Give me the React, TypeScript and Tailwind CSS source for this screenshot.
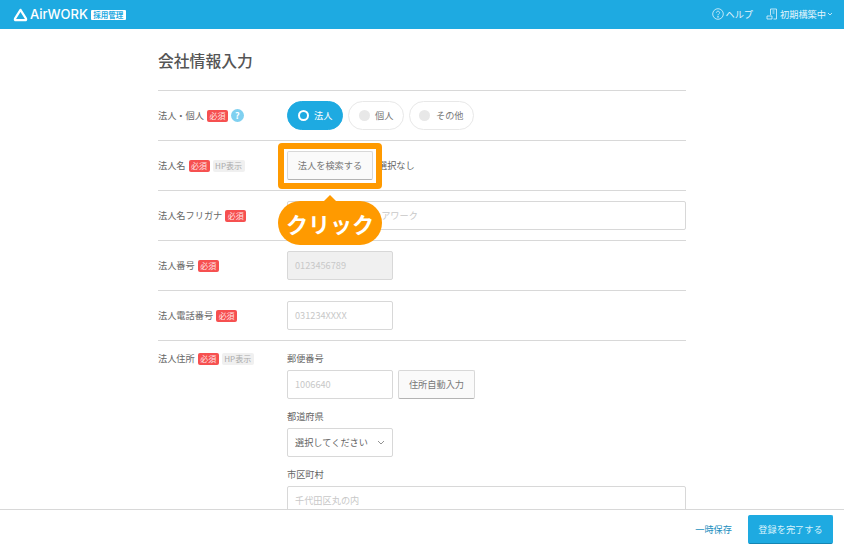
const Required = () => (
  <span className="ml-[3px] inline-flex h-[12px] w-[21px] items-center justify-center rounded-[2px] bg-[#f65050] text-[8px] text-[#ffe4e4]">
    必須
  </span>
);

const HpBadge = () => (
  <span className="ml-[3px] inline-flex h-[12px] w-[32px] items-center justify-center rounded-[2px] bg-[#f0f0f0] text-[8px] text-[#aaaaaa]">
    HP表示
  </span>
);

const Label = ({ text, hp }: { text: string; hp?: boolean }) => (
  <div className="flex w-[129px] shrink-0 items-center whitespace-nowrap pt-[1px] text-[9.2px] text-[#666666]">
    <span>{text}</span>
    <Required />
    {hp && <HpBadge />}
  </div>
);

const Pill = ({ text, active, width }: { text: string; active?: boolean; width: string }) => (
  <div
    className={`flex h-[29px] items-center justify-center gap-[5.5px] rounded-full border text-[9.2px] ${width} ${
      active ? "border-[#1eaae1] bg-[#1eaae1] text-white" : "border-[#e8e8e8] bg-white text-[#777777]"
    }`}
  >
    {active ? (
      <span className="h-[11px] w-[11px] rounded-full border-[2px] border-white" />
    ) : (
      <span className="h-[11px] w-[11px] rounded-full bg-[#e8e8e8]" />
    )}
    {text}
  </div>
);

const Input = ({ placeholder, width, disabled }: { placeholder: string; width: string; disabled?: boolean }) => (
  <div
    className={`flex h-[29px] items-center rounded-[2px] border border-[#d8d8d8] px-[7px] text-[9.2px] text-[#c8c8c8] ${width} ${
      disabled ? "bg-[#f0f0f0]" : "bg-white"
    }`}
  >
    {placeholder}
  </div>
);

const GrayButton = ({ text, width }: { text: string; width: string }) => (
  <div
    className={`flex h-[29px] items-center justify-center rounded-[2px] border border-[#d8d8d8] border-b-[#b4b4b4] bg-[#fafafa] text-[9.2px] text-[#777777] ${width}`}
  >
    {text}
  </div>
);

const App = () => {
  return (
    <div className="relative flex h-[549px] w-[844px] flex-col overflow-hidden bg-white font-['Noto_Sans_CJK_JP',sans-serif]">
      <header className="flex h-[29px] shrink-0 items-center justify-between bg-[#1eaae1] pl-[13px] pr-[11px] text-white">
        <div className="flex items-center">
          <svg width="15" height="14" viewBox="0 0 15 14" fill="none">
            <path
              d="M7.5 1.8 L13 10.6 Q13.6 12.2 12 12.2 H3 Q1.4 12.2 2 10.6 Z"
              stroke="white"
              strokeWidth="2.2"
              strokeLinejoin="round"
            />
          </svg>
          <span className="ml-[2px] font-['Inter',sans-serif] text-[13px] font-medium leading-none">
            AirWORK
          </span>
          <span className="ml-[3px] flex h-[10px] w-[35px] items-center justify-center rounded-[1px] bg-white text-[7.5px] font-bold leading-none text-[#1eaae1]">
            採用管理
          </span>
        </div>
        <div className="flex items-center text-[9.2px] text-[#e4f5fc]">
          <svg width="12" height="12" viewBox="0 0 12 12" fill="none" stroke="currentColor" strokeWidth="0.8">
            <circle cx="6" cy="6" r="5.3" />
            <path d="M4.4 4.7 C4.4 2.7 7.6 2.7 7.6 4.7 C7.6 5.9 6 5.9 6 7.3" />
            <circle cx="6" cy="8.9" r="0.4" fill="currentColor" />
          </svg>
          <span className="ml-[2px]">ヘルプ</span>
          <svg className="ml-[13px]" width="12" height="12" viewBox="0 0 12 12" fill="none" stroke="currentColor" strokeWidth="0.8">
            <path d="M4.5 7 V1 H10.5 V11 H7.5 M1 11 V8 H6 V11 Z M6.5 3 H8.5 M6.5 5 H8.5" />
          </svg>
          <span className="ml-[2px]">初期構築中</span>
          <svg className="ml-[1px]" width="6" height="4" viewBox="0 0 6 4" fill="none" stroke="currentColor" strokeWidth="0.8">
            <path d="M1 1 L3 3 L5 1" />
          </svg>
        </div>
      </header>

      <main className="min-h-0 flex-1 overflow-hidden pl-[158px] pr-[158px]">
        <h1 className="flex h-[61px] items-center pt-[2px] text-[15.8px] font-medium leading-none text-[#555555]">
          会社情報入力
        </h1>

        <div className="flex h-[50px] items-center border-t border-[#d8d8d8]">
          <div className="flex w-[129px] shrink-0 items-center whitespace-nowrap pt-[1px] text-[9.2px] text-[#666666]">
            <span>法人・個人</span>
            <Required />
            <span className="ml-[3px] flex h-[13px] w-[13px] items-center justify-center rounded-full bg-[#7fd0f0] text-[9px] font-bold text-white">
              ?
            </span>
          </div>
          <div className="flex gap-[5px]">
            <Pill text="法人" active width="w-[56px]" />
            <Pill text="個人" width="w-[56px]" />
            <Pill text="その他" width="w-[65px]" />
          </div>
        </div>

        <div className="flex h-[50px] items-center border-t border-[#d8d8d8]">
          <Label text="法人名" hp />
          <GrayButton text="法人を検索する" width="w-[86px]" />
          <span className="ml-[5px] text-[9.2px] text-[#666666]">選択なし</span>
        </div>

        <div className="flex h-[50px] items-center border-t border-[#d8d8d8]">
          <Label text="法人名フリガナ" />
          <div className="flex h-[29px] flex-1 items-center rounded-[2px] border border-[#d8d8d8] pl-[84px] text-[9.2px] text-[#c8c8c8]">
            エアワーク
          </div>
        </div>

        <div className="flex h-[50px] items-center border-t border-[#d8d8d8]">
          <Label text="法人番号" />
          <Input placeholder="0123456789" width="w-[106px]" disabled />
        </div>

        <div className="flex h-[50px] items-center border-t border-[#d8d8d8]">
          <Label text="法人電話番号" />
          <Input placeholder="031234XXXX" width="w-[106px]" />
        </div>

        <div className="flex items-start border-t border-[#d8d8d8] pt-[10px]">
          <Label text="法人住所" hp />
          <div className="flex-1 text-[9.2px] text-[#666666]">
            <div className="flex h-[19px] items-start leading-[14px]">郵便番号</div>
            <div className="flex gap-[5px]">
              <Input placeholder="1006640" width="w-[106px]" />
              <GrayButton text="住所自動入力" width="w-[77px]" />
            </div>
            <div className="mt-[10px] flex h-[19px] items-start leading-[14px]">都道府県</div>
            <div className="flex h-[29px] w-[106px] items-center justify-between rounded-[2px] border border-[#d8d8d8] pl-[7px] pr-[7px]">
              選択してください
              <svg width="8" height="5" viewBox="0 0 8 5" fill="none" stroke="#777777" strokeWidth="0.8">
                <path d="M1 1 L4 4 L7 1" />
              </svg>
            </div>
            <div className="mt-[10px] flex h-[19px] items-start leading-[14px]">市区町村</div>
            <Input placeholder="千代田区丸の内" width="w-full" />
          </div>
        </div>
      </main>

      <footer className="flex h-[40px] shrink-0 items-center justify-end border-t border-[#d8d8d8] bg-white pr-[11px]">
        <span className="text-[9.2px] text-[#1c8fc0]">一時保存</span>
        <div className="ml-[16px] flex h-[29px] w-[85px] items-center justify-center rounded-[2px] border border-[#1eaae1] border-b-[#1585b3] bg-[#1eaae1] text-[9.2px] text-[#d8f2fc]">
          登録を完了する
        </div>
      </footer>

      {/* annotation over the form */}
      <div className="absolute left-[278px] top-[143px] h-[46px] w-[104px] rounded-[4px] border-[6px] border-[#ff9a00]" />
      <div className="absolute left-[278px] top-[201px] flex h-[44px] w-[104px] items-center justify-center rounded-[22px] bg-[#ff9a00] text-[22px] font-bold leading-none text-white">
        <span className="absolute left-[46px] top-[-6px] h-0 w-0 border-x-[6px] border-b-[6px] border-x-transparent border-b-[#ff9a00]" />
        クリック
      </div>
    </div>
  );
};

export default App;
